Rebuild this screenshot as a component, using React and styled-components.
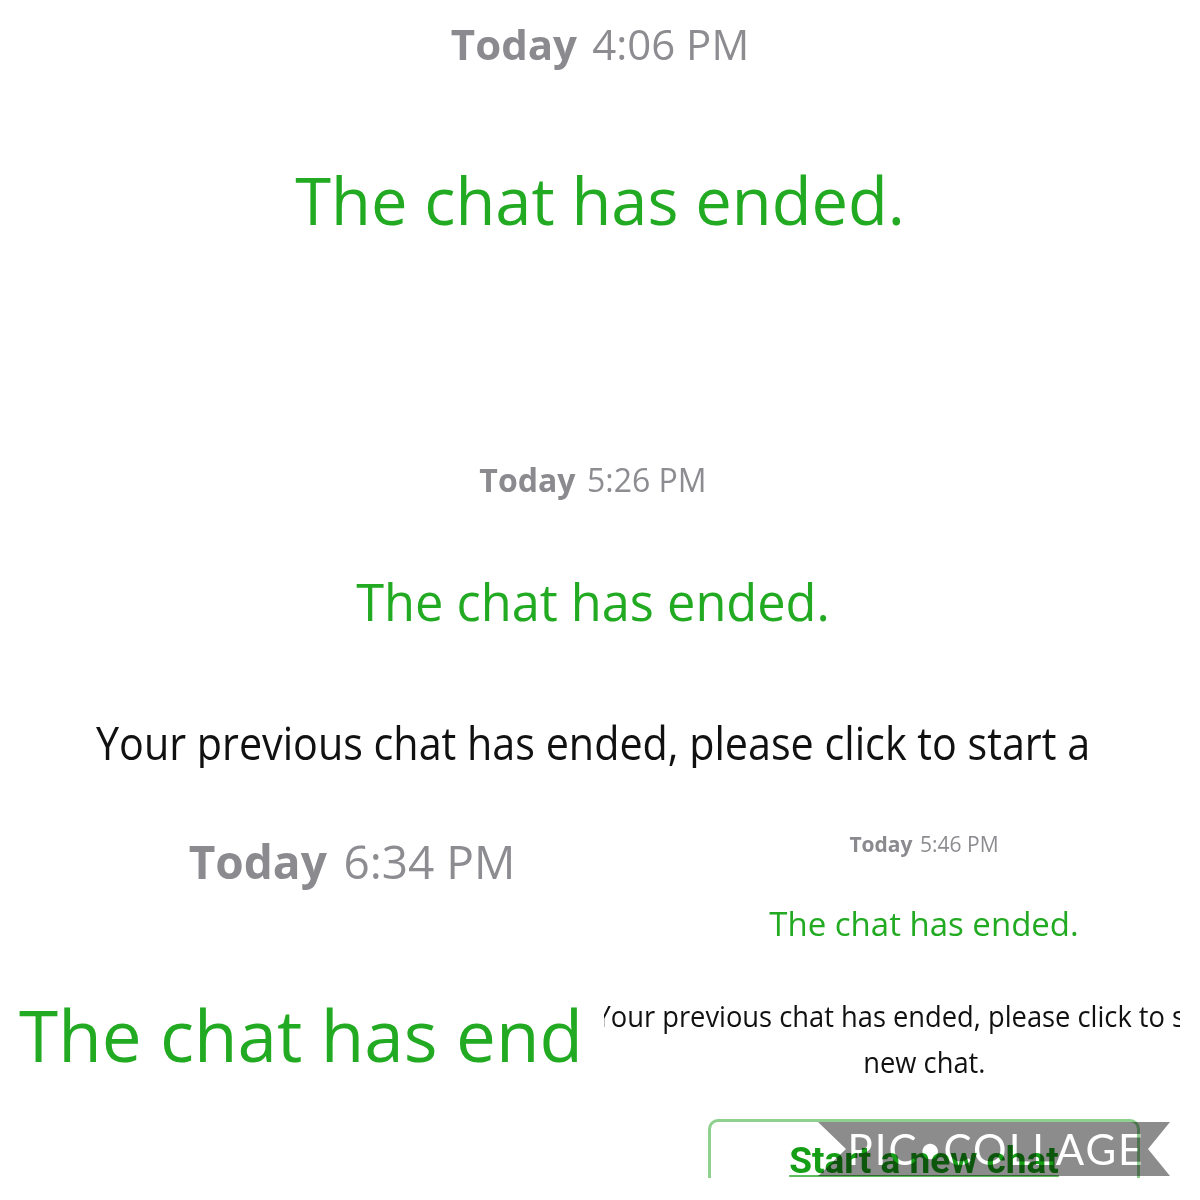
import React from "react";
import styled, { createGlobalStyle } from "styled-components";

const Global = createGlobalStyle`
  html, body { margin: 0; padding: 0; background: #ffffff; }
  body { font-family: "Open Sans", "Noto Sans", sans-serif; }
`;

const Page = styled.div`
  position: relative;
  width: 1200px;
  height: 1200px;
  background: #ffffff;
  display: flex;
  flex-direction: column;
  overflow: hidden;
`;

const Panel = styled.section`
  height: ${(p) => p.$h}px;
  overflow: hidden;
  display: flex;
  flex-direction: column;
  align-items: center;
  padding-top: ${(p) => p.$pt}px;
  padding-right: ${(p) => p.$pr || 0}px;
  box-sizing: border-box;
`;

const BottomRow = styled.div`
  margin-top: 32px;
  height: 378px;
  display: grid;
  grid-template-columns: 585px 576px;
  column-gap: 19px;
`;

const Clip = styled.div`
  overflow: hidden;
  height: 100%;
  display: flex;
  justify-content: flex-start;
`;

const Inner = styled.div`
  flex: 0 0 ${(p) => p.$w}px;
  width: ${(p) => p.$w}px;
  display: flex;
  flex-direction: column;
  align-items: center;
  padding-top: ${(p) => p.$pt}px;
  box-sizing: border-box;
`;

const Stamp = styled.div`
  font-family: "Open Sans", "Noto Sans", sans-serif;
  font-size: ${(p) => p.$size}px;
  line-height: 1.2;
  color: #8c8c91;
  white-space: nowrap;
  b {
    font-weight: 700;
    color: #8a8a8f;
    margin-right: 0.36em;
  }
`;

const Ended = styled.div`
  font-family: "Open Sans", "Noto Sans", sans-serif;
  font-size: ${(p) => p.$size}px;
  line-height: 1.2;
  color: #22aa22;
  white-space: nowrap;
  margin-top: ${(p) => p.$mt}px;
`;

const Body = styled.p`
  margin: ${(p) => p.$mt}px 0 0;
  font-family: "Open Sans", "Noto Sans", sans-serif;
  font-size: ${(p) => p.$size}px;
  line-height: ${(p) => p.$lh}px;
  color: #111111;
  text-align: center;
  white-space: nowrap;
  transform: scaleX(${(p) => p.$sx || 0.917});
`;

const NewChatButton = styled.button`
  margin-top: ${(p) => p.$mt}px;
  width: 432px;
  height: 120px;
  flex: 0 0 auto;
  box-sizing: border-box;
  border: 3px solid #8ed18e;
  border-radius: 10px;
  background: #ffffff;
  padding: 17px 0 0;
  display: flex;
  justify-content: center;
  align-items: flex-start;
  font-family: Roboto, "Liberation Sans", Arial, sans-serif;
  font-weight: 700;
  font-size: 37px;
  line-height: 1.2;
  color: #169f16;
  text-decoration: underline;
  text-decoration-color: #5dbd5d;
  text-decoration-thickness: 2px;
  text-underline-offset: 2px;
`;

const Ribbon = styled.div`
  position: absolute;
  left: 818px;
  top: 1122px;
  width: 352px;
  height: 54px;
  background: #8c8c8c;
  mix-blend-mode: multiply;
  clip-path: polygon(0 0, 100% 0, calc(100% - 22px) 50%, 100% 100%, 0 100%, 28px 50%);
  display: flex;
  align-items: center;
  justify-content: center;
  padding-left: 4px;
  box-sizing: border-box;
  font-family: "Lato", "Noto Sans", sans-serif;
  font-size: 42px;
  font-weight: 400;
  letter-spacing: 2px;
  color: #ffffff;
  white-space: nowrap;
`;

const Dot = styled.span`
  font-size: 0.75em;
  margin: 0 2px;
`;

function Timestamp({ size, time }) {
  return (
    <Stamp $size={size}>
      <b>Today</b>
      {time}
    </Stamp>
  );
}

export default function App() {
  return (
    <>
      <Global />
      <Page>
        <Panel $h={420} $pt={19}>
          <Timestamp size={42} time="4:06 PM" />
          <Ended $size={65} $mt={92}>The chat has ended.</Ended>
        </Panel>

        <Panel $h={348} $pt={41} $pr={14}>
          <Timestamp size={32} time="5:26 PM" />
          <Ended $size={50.5} $mt={73}>The chat has ended.</Ended>
          <Body $size={45} $lh={71} $mt={74}>
            Your previous chat has ended, please click to start a
            <br />
            new chat.
          </Body>
        </Panel>

        <BottomRow>
          <Clip>
            <Inner $w={704} $pt={34}>
              <Timestamp size={46} time="6:34 PM" />
              <Ended $size={71} $mt={103}>The chat has ended.</Ended>
            </Inner>
          </Clip>
          <Clip>
            <Inner $w={640} $pt={32}>
              <Timestamp size={21} time="5:46 PM" />
              <Ended $size={33} $mt={47}>The chat has ended.</Ended>
              <Body $size={30} $lh={46} $mt={49} $sx={0.91}>
                Your previous chat has ended, please click to start a
                <br />
                new chat.
              </Body>
              <NewChatButton $mt={34}>Start a new chat</NewChatButton>
            </Inner>
          </Clip>
        </BottomRow>

        <Ribbon>
          PIC<Dot>●</Dot>COLLAGE
        </Ribbon>
      </Page>
    </>
  );
}
